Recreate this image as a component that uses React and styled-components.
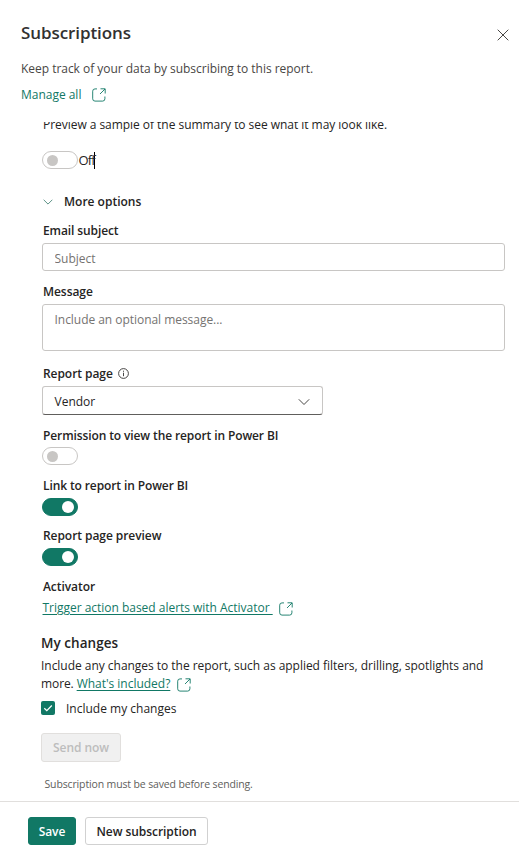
import React from 'react'
import styled, { createGlobalStyle } from 'styled-components'

const GlobalStyle = createGlobalStyle`
*{
    box-sizing:border-box;
}
body{
    margin:0;
    background:#fff;
    color:#252423;
    font-family:"Segoe UI", "Open Sans", "Noto Sans", sans-serif;
    font-size:12px;
    line-height:18px;
}
button, input, textarea{
    font:inherit;
    letter-spacing:inherit;
}
`
const Pane = styled.div`
display:flex;
flex-direction:column;
height:859px;
width:519px;
overflow:hidden;
`
const Header = styled.header`
flex:none;
height:122px;
padding:21px 8px 0 21px;
`
const TitleRow = styled.div`
display:flex;
justify-content:space-between;
align-items:flex-start;
height:39px;
`
const Title = styled.h1`
margin:0;
font-size:17px;
line-height:24px;
font-weight:600;
color:#323130;
letter-spacing:-0.08px;
`
const CloseButton = styled.button`
display:flex;
margin:6px 0 0 0;
padding:2px;
border:none;
background:none;
cursor:pointer;
`
const Text = styled.p`
margin:0;
height:18px;
white-space:nowrap;
color:${p => p.$color || '#252423'};
letter-spacing:${p => p.$track || -0.03}px;
`
const LinkRow = styled.div`
display:flex;
align-items:center;
height:18px;
margin:${p => p.$margin || 0};
gap:${p => p.$gap}px;
`
const Link = styled.a`
color:#117865;
white-space:pre;
letter-spacing:-0.02px;
text-decoration:${p => p.$underline ? 'underline' : 'none'};
text-underline-offset:2px;
cursor:pointer;
`
const Body = styled.main`
flex:none;
height:679px;
overflow:hidden;
padding:0 14px 0 42px;
`
const Summary = styled.div`
margin:-6px 0 0 1px;
`
const ToggleRow = styled.div`
display:flex;
align-items:center;
height:18px;
margin:${p => p.$margin || 0};
`
const Switch = styled.button`
display:flex;
align-items:center;
flex:none;
justify-content:${p => p.$on ? 'flex-end' : 'flex-start'};
width:36px;
height:18px;
padding:0 ${p => p.$on ? 3 : 4}px;
border:1px solid ${p => p.$on ? '#117865' : '#c8c6c4'};
border-radius:9px;
background:${p => p.$on ? '#117865' : '#fff'};
cursor:pointer;
`
const Knob = styled.span`
width:${p => p.$on ? 12 : 11}px;
height:${p => p.$on ? 12 : 11}px;
border-radius:50%;
background:${p => p.$on ? '#fff' : '#c8c6c4'};
`
const State = styled.span`
display:flex;
align-items:center;
width:17px;
height:17px;
padding:0 0 0 0.5px;
font-size:13px;
border-right:1px solid #000;
letter-spacing:-0.9px;
`
const Expander = styled.div`
display:flex;
align-items:center;
gap:11px;
height:18px;
margin:24px 0 0 1px;
font-weight:600;
`
const Label = styled.label`
display:flex;
align-items:center;
gap:5px;
height:18px;
margin:${p => p.$margin || 0};
padding:0 0 0 1px;
font-weight:600;
white-space:nowrap;
letter-spacing:${p => p.$track || -0.06}px;
`
const Input = styled.input`
display:block;
width:463px;
height:28px;
padding:2px 11px 0 11.5px;
border:1px solid #c8c6c4;
border-radius:3px;
outline:none;
&::placeholder{
    color:#757371;
    opacity:1;
}
`
const TextArea = styled.textarea`
display:block;
width:463px;
height:47px;
padding:6px 11px 0 11.5px;
border:1px solid #c8c6c4;
border-radius:3px;
outline:none;
resize:none;
letter-spacing:-0.04px;
&::placeholder{
    color:#757371;
    opacity:1;
}
`
const Select = styled.div`
display:flex;
align-items:center;
justify-content:space-between;
width:281px;
height:29px;
padding:2px 12px 0 11.5px;
border:1px solid #c8c6c4;
border-bottom-color:#605e5c;
border-radius:3px;
cursor:pointer;
`
const Changes = styled.section`
margin:17px 0 0 -1px;
`
const SubTitle = styled.h2`
margin:0;
font-size:13.5px;
line-height:18px;
height:23px;
font-weight:600;
letter-spacing:0.05px;
`
const CheckRow = styled.label`
display:flex;
align-items:flex-start;
gap:11px;
height:18px;
margin:7px 0 0 0;
`
const CheckBox = styled.span`
display:flex;
align-items:center;
justify-content:center;
width:14px;
height:14px;
margin:1px 0 0 0;
border-radius:2px;
background:#117865;
`
const Button = styled.button`
display:flex;
align-items:center;
justify-content:center;
width:${p => p.$width}px;
height:${p => p.$height || 28}px;
padding:1px 0 0;
border:1px solid ${p => p.$primary ? '#117865' : p.disabled ? '#e1dfdd' : '#d1d1d1'};
border-radius:3px;
background:${p => p.$primary ? '#117865' : p.disabled ? '#f0f0f0' : '#fff'};
color:${p => p.$primary ? '#fff' : p.disabled ? '#bdbdbd' : '#252423'};
font-weight:600;
white-space:nowrap;
letter-spacing:-0.06px;
`
const SendRow = styled.div`
display:flex;
margin:15px 0 0 0;
`
const Note = styled.p`
margin:14px 0 0 3.5px;
font-size:10.5px;
line-height:16px;
color:#605e5c;
letter-spacing:-0.14px;
`
const Footer = styled.footer`
display:flex;
gap:9px;
flex:1;
padding:15px 28px 0;
border-top:1px solid #e1dfdd;
`
const OpenSvg = styled.svg`
flex:none;
margin:${p => p.$drop || 0}px 0 0 0;
`

function OpenIcon({ drop }) {
    return (
        <OpenSvg $drop={drop} width="14" height="14" viewBox="0 0 14 14" fill="none" stroke="#117865" strokeWidth=".9">
            <path d="M5 .9H3A2.3 2.3 0 0 0 .7 3.2V10.8A2.3 2.3 0 0 0 3 13.1H10.6A2.3 2.3 0 0 0 12.9 10.8V8.5" />
            <path d="M8.5 .8H13.2V5.5M13 1L8 6" />
        </OpenSvg>
    )
}

function Chevron({ size, color }) {
    return (
        <svg width={size} height={size} viewBox="0 0 12 12" fill="none" stroke={color}>
            <path d="M.8 3.3L6 8.5L11.2 3.3" />
        </svg>
    )
}

function Toggle({ on, margin, children }) {
    return (
        <ToggleRow $margin={margin}>
            <Switch $on={on} role="switch" aria-checked={on}><Knob $on={on} /></Switch>
            {children}
        </ToggleRow>
    )
}

export default function App() {
    return (
        <Pane>
            <GlobalStyle />
            <Header>
                <TitleRow>
                    <Title>Subscriptions</Title>
                    <CloseButton aria-label="Close">
                        <svg width="12" height="12" viewBox="0 0 12 12" stroke="#484644">
                            <path d="M.7 .7L11.3 11.3M11.3 .7L.7 11.3" />
                        </svg>
                    </CloseButton>
                </TitleRow>
                <Text $color="#484644">Keep track of your data by subscribing to this report.</Text>
                <LinkRow $gap={11} $margin="8px 0 0 0">
                    <Link>Manage all</Link>
                    <OpenIcon />
                </LinkRow>
            </Header>
            <Body>
                <Summary>
                    <Text $track={-0.04}>Preview a sample of the summary to see what it may look like.</Text>
                </Summary>
                <Toggle on={false} margin="17px 0 0 0"><State>Off</State></Toggle>
                <Expander>
                    <Chevron size={10} color="#3b7d6f" />
                    <span>More options</span>
                </Expander>
                <Label $margin="11px 0 3px 0" $track={-0.1}>Email subject</Label>
                <Input placeholder="Subject" />
                <Label $margin="12px 0 3px 0">Message</Label>
                <TextArea placeholder="Include an optional message..." />
                <Label $margin="14px 0 3px 0">
                    Report page
                    <svg width="11" height="13" viewBox="0 0 11 13" fill="none" stroke="#323130" strokeWidth=".9">
                        <circle cx="5.5" cy="5.5" r="4.9" />
                        <path d="M5.5 4.7V8.2M5.5 2.7V3.8" />
                    </svg>
                </Label>
                <Select>
                    <span>Vendor</span>
                    <Chevron size={12} color="#484644" />
                </Select>
                <Label $margin="12px 0 2px 0" $track={-0.11}>Permission to view the report in Power BI</Label>
                <Toggle on={false} />
                <Label $margin="12px 0 3px 0" $track={-0.11}>Link to report in Power BI</Label>
                <Toggle on />
                <Label $margin="11px 0 3px 0">Report page preview</Label>
                <Toggle on />
                <Label $margin="12px 0 3px 0">Activator</Label>
                <LinkRow $gap={6} $margin="0 0 0 0.5px">
                    <Link $underline>{'Trigger action based alerts with Activator '}</Link>
                    <OpenIcon drop={2} />
                </LinkRow>
                <Changes>
                    <SubTitle>My changes</SubTitle>
                    <Text>Include any changes to the report, such as applied filters, drilling, spotlights and</Text>
                    <LinkRow $gap={7}>
                        <Text $track={-0.1}>more. <Link $underline>What's included?</Link></Text>
                        <OpenIcon drop={2} />
                    </LinkRow>
                    <CheckRow>
                        <CheckBox>
                            <svg width="10" height="10" viewBox="0 0 10 10" fill="none" stroke="#fff" strokeWidth="1.3">
                                <path d="M1.3 5.2L3.8 7.6L8.8 2.5" />
                            </svg>
                        </CheckBox>
                        Include my changes
                    </CheckRow>
                    <SendRow>
                        <Button disabled $width={80} $height={29}>Send now</Button>
                    </SendRow>
                    <Note>Subscription must be saved before sending.</Note>
                </Changes>
            </Body>
            <Footer>
                <Button $primary $width={48}>Save</Button>
                <Button $width={123}>New subscription</Button>
            </Footer>
        </Pane>
    )
}
